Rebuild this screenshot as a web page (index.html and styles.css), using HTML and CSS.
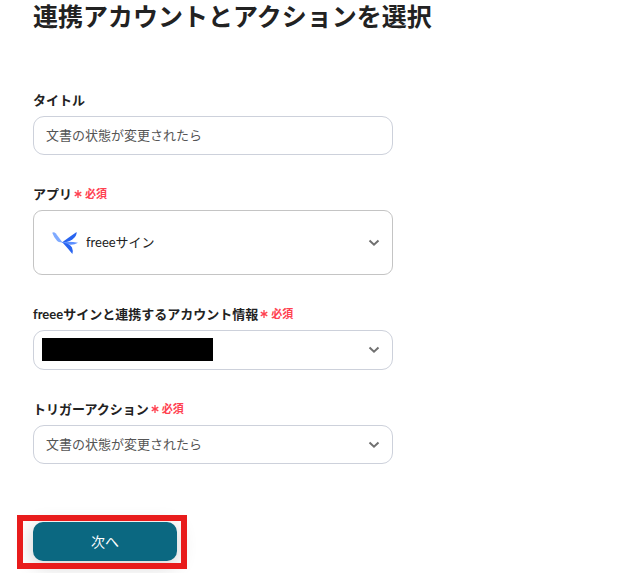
FILE: index.html
```html
<!DOCTYPE html>
<html lang="ja">
<head>
<meta charset="utf-8">
<meta name="viewport" content="width=device-width, initial-scale=1">
<title>連携アカウントとアクションを選択</title>
<link rel="stylesheet" href="styles.css">
</head>
<body>
<main class="page">
  <h1 class="heading">連携アカウントとアクションを選択</h1>
  <form class="form">
    <div class="field">
      <div class="caption"><label for="title">タイトル</label></div>
      <input class="control" id="title" type="text" value="文書の状態が変更されたら">
    </div>
    <div class="field">
      <div class="caption">
        <label for="app">アプリ</label>
        <span class="required"><svg class="star" viewBox="0 0 8 8" aria-hidden="true"><path d="M4 0v8M.7 2.1l6.6 3.8M7.3 2.1L.7 5.9"/></svg>必須</span>
      </div>
      <div class="picker">
        <select class="control control-app" id="app"><option>freeeサイン</option></select>
        <svg class="app-logo" viewBox="0 0 26 22" aria-hidden="true">
          <path fill="#7faaff" d="M.2 .8Q1.800-.4 3.600 1.200L10.200 9.900Q7.600 11.200 5.200 8.900 1.800 5.500 .2 .8Z"/>
          <path fill="#2864f0" d="M9.500 10.700Q16 6 24.600 0 25 3.800 20.600 7.200 16 10.400 9.500 10.700Z"/>
          <path fill="#5c8fff" d="M9 10.300Q17 8.800 26 10.700 21 13.800 15 12.300Z"/>
          <path fill="#2864f0" d="M10.500 10.600Q18 11.500 20 15.600 21.300 18.600 20.400 22 15 15.500 10.500 10.600Z"/>
        </svg>
        <svg class="chevron" viewBox="0 0 12 8" aria-hidden="true"><path d="M1.500 1.500L6 5.700l4.500-4.200"/></svg>
      </div>
    </div>
    <div class="field">
      <div class="caption">
        <label for="account">freeeサインと連携するアカウント情報</label>
        <span class="required"><svg class="star" viewBox="0 0 8 8" aria-hidden="true"><path d="M4 0v8M.7 2.1l6.6 3.8M7.3 2.1L.7 5.9"/></svg>必須</span>
      </div>
      <div class="picker">
        <select class="control control-account" id="account"><option></option></select>
        <span class="redaction"></span>
        <svg class="chevron" viewBox="0 0 12 8" aria-hidden="true"><path d="M1.500 1.500L6 5.700l4.500-4.200"/></svg>
      </div>
    </div>
    <div class="field">
      <div class="caption">
        <label for="trigger">トリガーアクション</label>
        <span class="required"><svg class="star" viewBox="0 0 8 8" aria-hidden="true"><path d="M4 0v8M.7 2.1l6.6 3.8M7.3 2.1L.7 5.9"/></svg>必須</span>
      </div>
      <div class="picker">
        <select class="control" id="trigger"><option>文書の状態が変更されたら</option></select>
        <svg class="chevron" viewBox="0 0 12 8" aria-hidden="true"><path d="M1.500 1.500L6 5.700l4.500-4.200"/></svg>
      </div>
    </div>
    <div class="actions"><button class="next" type="button">次へ</button></div>
  </form>
</main>
</body>
</html>
```
FILE: styles.css
```css
* { box-sizing: border-box; }
body {
  margin: 0;
  background: #fff;
  color: #222;
  font-family: Lato, "Noto Sans CJK JP", sans-serif;
  font-size: 13px;
  line-height: 20px;
}
.page { padding: 0 33px 12px; }
.heading {
  margin: 0 0 57px;
  font-size: 25px;
  line-height: 33px;
  font-weight: 700;
}
.form { max-width: 360px; }
.field { margin-bottom: 29px; }
.caption {
  display: flex;
  align-items: center;
  gap: 2px;
  margin-bottom: 6px;
  font-weight: 700;
}
.required {
  display: flex;
  align-items: center;
  gap: 3px;
  color: #ff4150;
  font-size: 11px;
}
.star {
  width: 8px;
  height: 8px;
  fill: none;
  stroke: currentColor;
  stroke-width: 1.3;
}
.picker { position: relative; }
.control {
  display: block;
  width: 100%;
  height: 39px;
  margin: 0;
  padding: 0 36px 2px 12px;
  border: 1px solid #cdd1db;
  border-radius: 11px;
  background: #fff;
  color: #555;
  font: inherit;
  appearance: none;
}
.control-account { height: 40px; }
.control-app {
  height: 65px;
  padding-left: 52px;
  border-color: #c4c4c4;
  border-radius: 9px;
  color: #222;
}
.app-logo {
  position: absolute;
  top: 50%;
  left: 19px;
  width: 26px;
  height: 22px;
  transform: translateY(-50%);
  pointer-events: none;
}
.chevron {
  position: absolute;
  top: 50%;
  right: 13px;
  width: 12px;
  height: 8px;
  transform: translateY(-50%);
  fill: none;
  stroke: #707070;
  stroke-width: 2;
  pointer-events: none;
}
.redaction {
  position: absolute;
  top: 8px;
  left: 9px;
  width: 171px;
  height: 23px;
  background: #000;
}
.actions {
  position: relative;
  width: 144px;
  margin-top: 58px;
}
.actions::after {
  content: "";
  position: absolute;
  inset: -7px -10px -8px -16px;
  border: 6px solid #e81c1c;
  pointer-events: none;
}
.next {
  display: block;
  width: 100%;
  height: 39px;
  padding: 0;
  border: 0;
  border-radius: 10px;
  background: #0b6881;
  box-shadow: 0 4px 20px rgb(0 0 0 / 20%);
  color: #fff;
  font: inherit;
  font-size: 14px;
}
```
